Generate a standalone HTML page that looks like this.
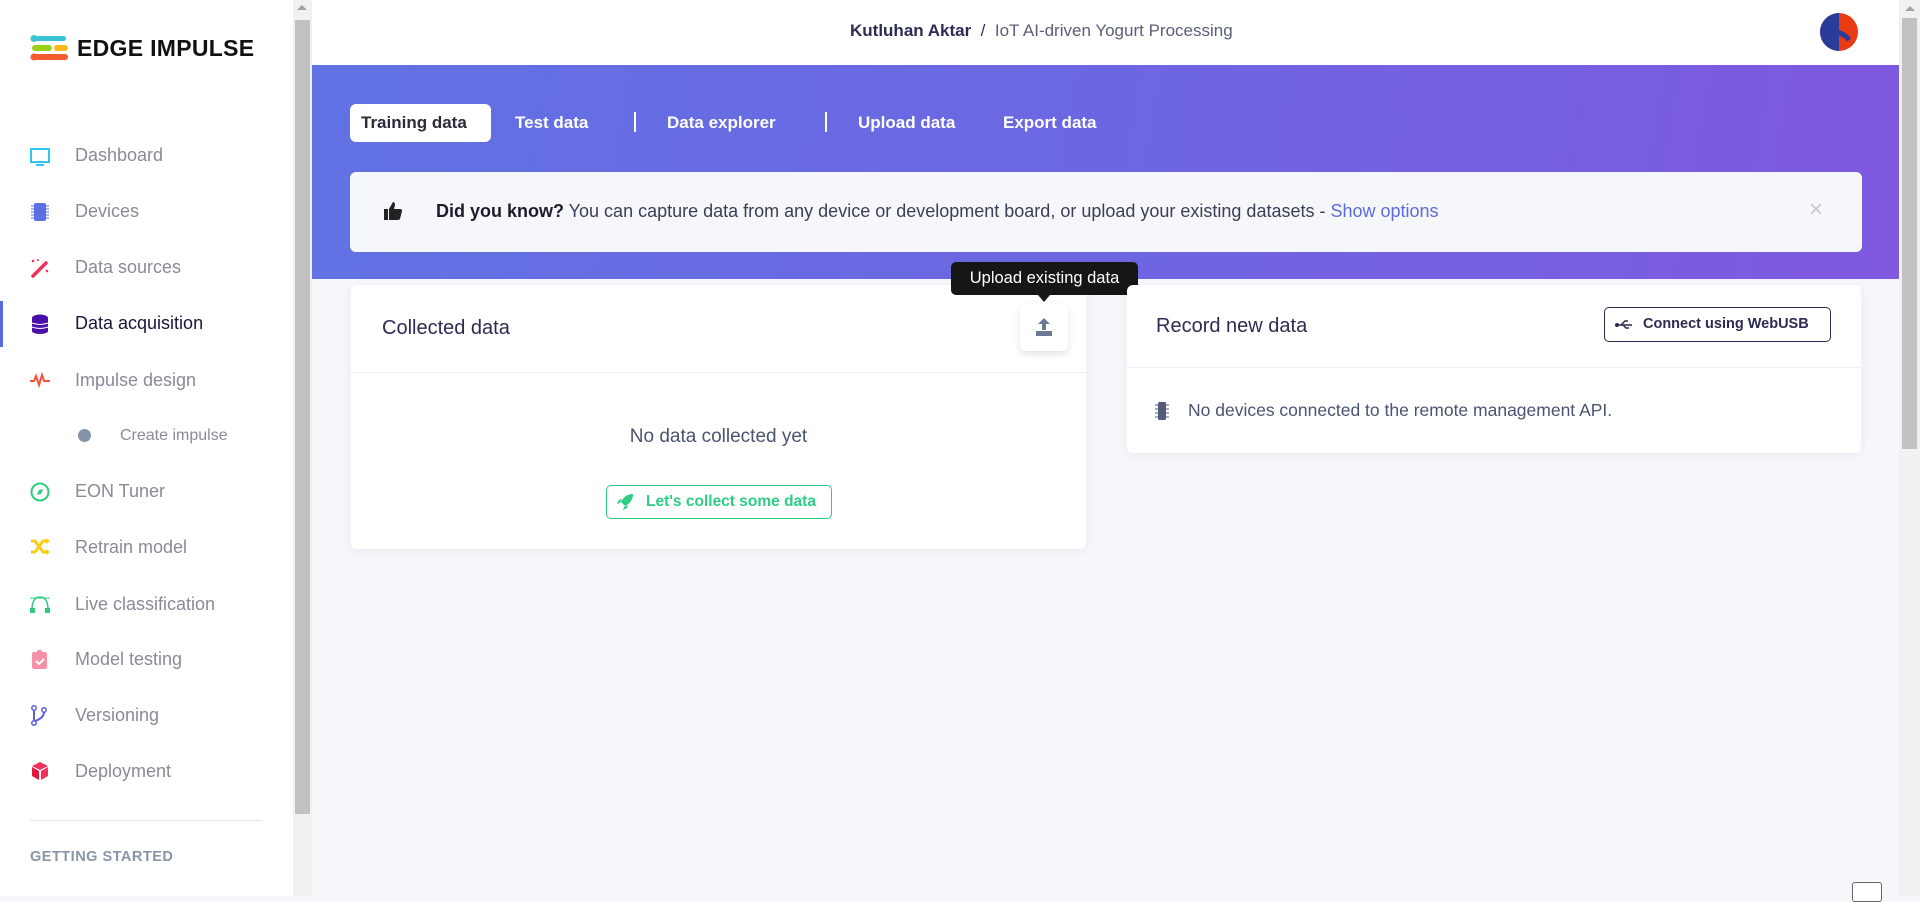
<!DOCTYPE html>
<html><head><meta charset="utf-8">
<style>
*{box-sizing:border-box;margin:0;padding:0}
body{width:1920px;height:896px;overflow:hidden;background:#f6f7fb;font-family:"Liberation Sans",sans-serif;position:relative}
.abs{position:absolute}
.side{left:0;top:0;width:293px;height:896px;background:#fff}
.sb{left:293px;top:0;width:19px;height:896px;background:#f1f1f1}
.sbt{left:295px;top:20px;width:15px;height:794px;background:#c1c1c1}
.nav{position:absolute;left:75px;font-size:18px;color:#8a8a99;line-height:22px}
.ico{position:absolute;left:29px;width:22px;height:22px}
.hdr{left:312px;top:0;width:1587px;height:65px;background:#fff}
.ban{left:312px;top:65px;width:1587px;height:214px;background:linear-gradient(100deg,#6172e4 0%,#6d66e2 50%,#7f59e0 100%)}
.tab{position:absolute;top:110px;font-size:17px;font-weight:bold;color:#fff;line-height:26px;white-space:nowrap}
.card{background:#fff;border-radius:6px;box-shadow:0 2px 10px rgba(40,50,90,.06)}
.rsb{left:1899px;top:0;width:21px;height:896px;background:#f1f1f1}
</style></head><body>
<div class="abs side"></div>
<svg class="abs" style="left:30px;top:34px" width="40" height="28" viewBox="0 0 40 28">
<rect x="2" y="2" width="34" height="5" rx="2.5" fill="#3ac2d6"/><circle cx="4" cy="4.5" r="3.5" fill="#3ac2d6"/>
<rect x="2" y="11" width="20" height="6" rx="3" fill="#9ccf1a"/><rect x="24" y="11" width="14" height="6" rx="3" fill="#f9b81b"/>
<rect x="2" y="20" width="36" height="6" rx="3" fill="#f45b2d"/><circle cx="4" cy="23" r="3.5" fill="#f45b2d"/>
</svg>
<div class="abs" style="left:77px;top:35px;font-size:23px;font-weight:bold;color:#111;letter-spacing:0.3px">EDGE IMPULSE</div>

<div class="abs" style="left:0;top:301px;width:3px;height:46px;background:#5a6be0"></div>
<svg class="ico" style="top:146px" viewBox="0 0 22 22"><rect x="2" y="3" width="18" height="13" fill="none" stroke="#2ec6ea" stroke-width="2"/><rect x="7" y="18" width="8" height="2" fill="#2ec6ea"/></svg>
<svg class="ico" style="top:201px" viewBox="0 0 22 22"><rect x="5" y="2" width="12" height="18" rx="2" fill="#5b6fe0"/><g stroke="#5b6fe0" stroke-width="1"><path d="M2 5h3M2 8h3M2 11h3M2 14h3M2 17h3M17 5h3M17 8h3M17 11h3M17 14h3M17 17h3"/></g></svg>
<svg class="ico" style="top:257px" viewBox="0 0 22 22"><path d="M4 19L17 6" stroke="#f0325a" stroke-width="3.5" stroke-linecap="round"/><circle cx="4" cy="4" r="1.3" fill="#f0325a"/><circle cx="9" cy="3" r="1" fill="#f0325a"/><circle cx="18" cy="14" r="1.3" fill="#f0325a"/></svg>
<svg class="ico" style="top:313px" viewBox="0 0 22 22"><ellipse cx="11" cy="5" rx="8" ry="3.5" fill="#4a0fa8"/><rect x="3" y="5" width="16" height="13" fill="#4a0fa8"/><ellipse cx="11" cy="18" rx="8" ry="3" fill="#4a0fa8"/><path d="M3 10q8 3 16 0M3 14q8 3 16 0" stroke="#fff" stroke-width="1" fill="none"/></svg>
<svg class="ico" style="top:369px" viewBox="0 0 22 22"><path d="M1 12h4l2-5 3 9 3-10 2 6h6" stroke="#f4533a" stroke-width="2" fill="none"/></svg>
<div class="abs" style="left:78px;top:429px;width:13px;height:13px;border-radius:50%;background:#8393a8"></div>
<svg class="ico" style="top:481px" viewBox="0 0 22 22"><circle cx="11" cy="11" r="8.5" fill="none" stroke="#2dcc7d" stroke-width="2"/><path d="M14 8l-2 5-4 1 2-5z" fill="#2dcc7d"/></svg>
<svg class="ico" style="top:536px" viewBox="0 0 22 22"><path d="M2 5h4l8 11h4M2 16h4l8-11h4" stroke="#f9cc15" stroke-width="3" fill="none"/><path d="M17 2l4 3-4 3zM17 13l4 3-4 3z" fill="#f9cc15"/></svg>
<svg class="ico" style="top:593px" viewBox="0 0 22 22"><path d="M3 17q0-13 8-13t8 13" stroke="#2dcc7d" stroke-width="1.5" fill="none"/><rect x="1" y="15" width="5" height="5" fill="#2dcc7d"/><rect x="16" y="15" width="5" height="5" fill="#2dcc7d"/><path d="M1 5h20" stroke="#2dcc7d" stroke-width="1"/></svg>
<svg class="ico" style="top:648px" viewBox="0 0 22 22"><rect x="3" y="4" width="15" height="17" rx="2" fill="#f592a8"/><rect x="8" y="2" width="5" height="4" rx="1" fill="#f592a8"/><path d="M7 13l3 3 5-5" stroke="#fff" stroke-width="2" fill="none"/></svg>
<svg class="ico" style="top:704px" viewBox="0 0 22 22"><circle cx="5" cy="4" r="2.2" fill="none" stroke="#5a5fe0" stroke-width="1.5"/><circle cx="5" cy="19" r="2.2" fill="none" stroke="#5a5fe0" stroke-width="1.5"/><circle cx="15" cy="6" r="2.2" fill="none" stroke="#5a5fe0" stroke-width="1.5"/><path d="M5 6v11M15 8q0 6-9 9" stroke="#5a5fe0" stroke-width="2" fill="none"/></svg>
<svg class="ico" style="top:760px" viewBox="0 0 22 22"><path d="M11 2l8 4-8 4-8-4z" fill="#f0325a"/><path d="M3 7l7 4v9l-7-4z" fill="#e0173d"/><path d="M19 7l-7 4v9l7-4z" fill="#f0325a"/></svg>

<div class="nav" style="top:144px">Dashboard</div>
<div class="nav" style="top:200px">Devices</div>
<div class="nav" style="top:256px">Data sources</div>
<div class="nav" style="top:312px;color:#17173a">Data acquisition</div>
<div class="nav" style="top:369px">Impulse design</div>
<div class="nav" style="top:425px;left:120px;font-size:16px">Create impulse</div>
<div class="nav" style="top:480px">EON Tuner</div>
<div class="nav" style="top:536px">Retrain model</div>
<div class="nav" style="top:593px">Live classification</div>
<div class="nav" style="top:648px">Model testing</div>
<div class="nav" style="top:704px">Versioning</div>
<div class="nav" style="top:760px">Deployment</div>
<div class="abs" style="left:30px;top:820px;width:232px;height:1px;background:#e4e6ea"></div>
<div class="abs" style="left:30px;top:849px;font-size:14.5px;font-weight:bold;color:#8a94a6;letter-spacing:.5px">GETTING STARTED</div>

<div class="abs sb"></div><div class="abs sbt"></div>
<div class="abs" style="left:297px;top:5px;width:0;height:0;border-left:5px solid transparent;border-right:5px solid transparent;border-bottom:5px solid #a3a3a3"></div>

<div class="abs hdr"></div>
<div class="abs" style="left:850px;top:21px;font-size:17px;color:#2e2e55;white-space:nowrap"><b style="font-weight:bold;color:#2c2c52">Kutluhan Aktar</b>&nbsp; / &nbsp;<span style="color:#5a5f77">IoT AI-driven Yogurt Processing</span></div>
<svg class="abs" style="left:1819px;top:12px" width="40" height="40" viewBox="0 0 40 40"><circle cx="20" cy="20" r="19" fill="#e93a13"/><path d="M20 1a19 19 0 0 0 0 38" fill="#2a3c9a"/><path d="M10 8h4v14q8-4 16 6" stroke="#2a3c9a" stroke-width="5" fill="none"/></svg>

<div class="abs ban"></div>
<div class="abs" style="left:350px;top:104px;width:141px;height:38px;background:#fff;border-radius:6px"></div>
<div class="tab" style="left:361px;color:#2b2b3a">Training data</div>
<div class="tab" style="left:515px">Test data</div>
<div class="abs" style="left:634px;top:112px;width:2px;height:20px;background:#fff"></div>
<div class="tab" style="left:667px">Data explorer</div>
<div class="abs" style="left:825px;top:112px;width:2px;height:20px;background:#fff"></div>
<div class="tab" style="left:858px">Upload data</div>
<div class="tab" style="left:1003px">Export data</div>

<div class="abs" style="left:350px;top:172px;width:1512px;height:80px;background:#f5f7fa;border-radius:6px"></div>
<svg class="abs" style="left:383px;top:201px" width="20" height="20" viewBox="0 0 20 20"><rect x="1" y="8" width="4" height="11" fill="#222"/><path d="M6 8l4-7q2 0 2 3l-1 4h6q2 0 2 2l-2 8q-1 1-2 1H6z" fill="#222"/></svg>
<div class="abs" style="left:436px;top:201px;font-size:18px;color:#3b3f55;white-space:nowrap"><b style="color:#1c1c2a">Did you know?</b> You can capture data from any device or development board, or upload your existing datasets - <span style="color:#5d6be0">Show options</span></div>
<div class="abs" style="left:1809px;top:196px;font-size:24px;color:#c3c6cf">×</div>

<div class="abs card" style="left:351px;top:285px;width:735px;height:264px"></div>
<div class="abs" style="left:351px;top:372px;width:735px;height:1px;background:#eceef2"></div>
<div class="abs" style="left:382px;top:317px;font-size:20px;color:#2c2c52">Collected data</div>
<div class="abs" style="left:1020px;top:304px;width:48px;height:47px;background:#fff;border-radius:6px;box-shadow:0 3px 8px rgba(0,0,0,.12)"></div>
<svg class="abs" style="left:1034px;top:317px" width="20" height="20" viewBox="0 0 20 20"><path d="M10 1l6 6h-4v6H8V7H4z" fill="#6a7a94"/><rect x="2" y="14" width="16" height="5" fill="#6a7a94"/></svg>
<div class="abs" style="left:951px;top:262px;width:187px;height:33px;background:#161616;border-radius:5px;color:#fff;font-size:16.5px;text-align:center;line-height:33px">Upload existing data</div>
<div class="abs" style="left:1038px;top:295px;width:0;height:0;border-left:6px solid transparent;border-right:6px solid transparent;border-top:7px solid #161616"></div>
<div class="abs" style="left:351px;top:426px;width:735px;text-align:center;font-size:19px;color:#4b5470">No data collected yet</div>
<div class="abs" style="left:606px;top:485px;width:226px;height:34px;border:1.5px solid #2ecc84;border-radius:5px"></div>
<svg class="abs" style="left:616px;top:493px" width="18" height="18" viewBox="0 0 18 18"><path d="M17 1q-8 0-12 8l4 4q8-4 8-12zM4 10l-3 1 2-4 3-1zM8 14l-1 3 4-2 1-3z" fill="#2ecc84"/></svg>
<div class="abs" style="left:646px;top:493px;font-size:15.5px;font-weight:bold;color:#2ecc84">Let's collect some data</div>

<div class="abs card" style="left:1127px;top:285px;width:734px;height:168px"></div>
<div class="abs" style="left:1127px;top:367px;width:734px;height:1px;background:#eceef2"></div>
<div class="abs" style="left:1156px;top:315px;font-size:20px;color:#2c2c52">Record new data</div>
<div class="abs" style="left:1604px;top:307px;width:227px;height:35px;border:1.5px solid #2c2c52;border-radius:5px"></div>
<svg class="abs" style="left:1615px;top:318px" width="18" height="14" viewBox="0 0 18 14"><path d="M1 7h16M6 7l4-4h3M8 7l3 3h3" stroke="#2c2c52" stroke-width="1.5" fill="none"/><circle cx="2" cy="7" r="2" fill="#2c2c52"/></svg>
<div class="abs" style="left:1643px;top:316px;font-size:14.5px;font-weight:bold;color:#2c2c52;white-space:nowrap">Connect using WebUSB</div>
<svg class="abs" style="left:1155px;top:401px" width="14" height="20" viewBox="0 0 14 20"><rect x="3" y="1" width="8" height="18" rx="1.5" fill="#535b78"/><path d="M0 4h3M0 8h3M0 12h3M0 16h3M11 4h3M11 8h3M11 12h3M11 16h3" stroke="#535b78" stroke-width="1"/></svg>
<div class="abs" style="left:1188px;top:400px;font-size:17.5px;color:#4b5470">No devices connected to the remote management API.</div>

<div class="abs rsb"></div>
<div class="abs" style="left:1902px;top:18px;width:15px;height:431px;background:#c1c1c1"></div>
<div class="abs" style="left:1905px;top:6px;width:0;height:0;border-left:5px solid transparent;border-right:5px solid transparent;border-bottom:5px solid #a3a3a3"></div>
<div class="abs" style="left:1852px;top:882px;width:30px;height:20px;border:1.5px solid #666;border-radius:3px;background:#fff"></div>
</body></html>
